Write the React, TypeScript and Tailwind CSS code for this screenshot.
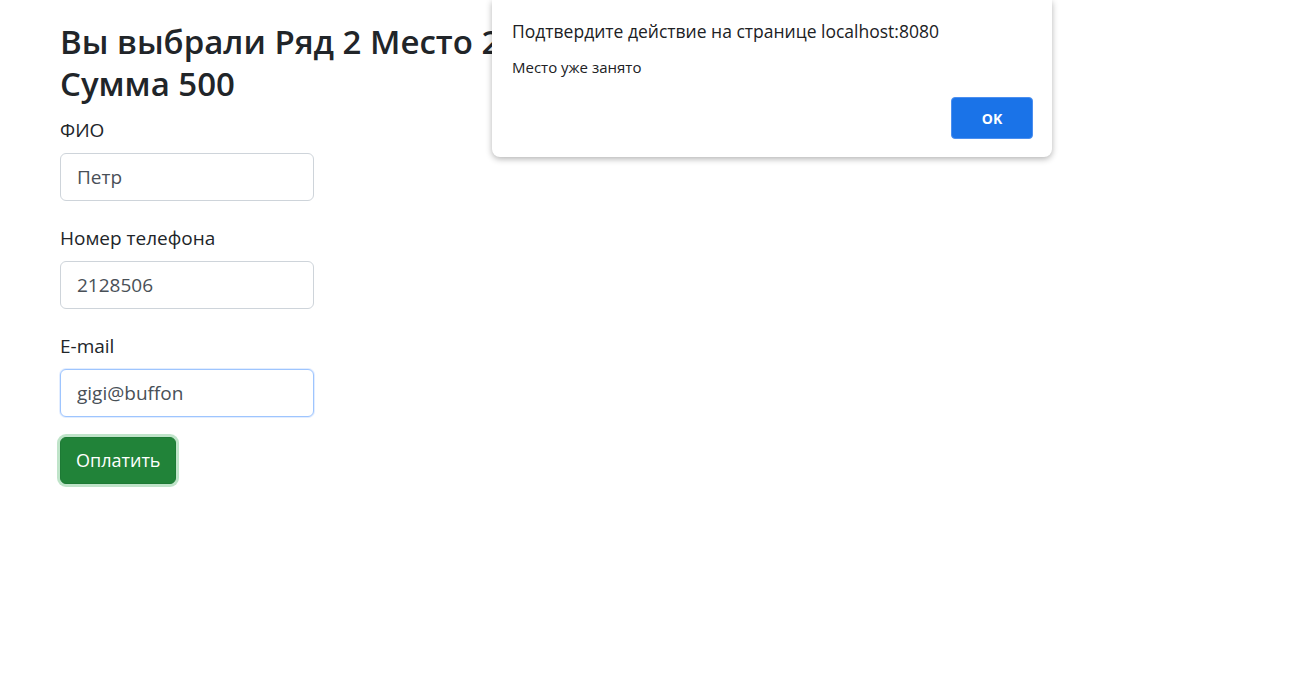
import React from "react";

const font = { fontFamily: '"Open Sans", "Noto Sans", sans-serif' };

function Field({ label, value, focused }: { label: string; value: string; focused?: boolean }) {
  return (
    <div className="mb-6">
      <label className="mb-[9px] block text-[19px] leading-[27px] text-[#212529]">{label}</label>
      <input
        readOnly
        value={value}
        className={`block h-[48px] w-[254px] rounded-[6px] border bg-white px-4 text-[19px] text-[#495057] outline-none ${
          focused ? "border-[#9ec5fe] shadow-[0_0_0_1px_rgba(13,110,253,0.12)]" : "border-[#ced4da]"
        }`}
      />
    </div>
  );
}

export default function App() {
  return (
    <div className="relative min-h-[691px] w-full bg-white" style={font}>
      <div className="px-[60px] pt-[21px]">
        <h1 className="mb-3 text-[33px] font-semibold leading-[42px] text-[#212529]">
          Вы выбрали Ряд 2 Место 2
          <br />
          Сумма 500
        </h1>
        <Field label="ФИО" value="Петр" />
        <Field label="Номер телефона" value="2128506" />
        <Field label="E-mail" value="gigi@buffon" focused />
        <button className="-mt-[4px] h-[47px] rounded-[6px] border border-[#1d7a35] bg-[#218339] px-[15px] text-[18px] text-white shadow-[0_0_0_3px_rgba(113,195,135,0.45)]">
          Оплатить
        </button>
      </div>

      <div className="absolute left-[492px] top-0 w-[560px] rounded-b-[8px] bg-white px-5 pb-[18px] pt-[19px] shadow-[0_2px_6px_rgba(0,0,0,0.3)]">
        <div className="text-[17.5px] leading-[24px] text-[#202124]">Подтвердите действие на странице localhost:8080</div>
        <div className="mt-[14px] text-[15px] leading-[20px] text-[#202124]">Место уже занято</div>
        <div className="mt-[20px] flex justify-end pr-[-1px]">
          <button className="-mr-[1px] h-[42px] w-[82px] rounded-[4px] border border-[#4b8ff0] bg-[#1a73e8] text-[14px] font-bold text-white">
            OK
          </button>
        </div>
      </div>
    </div>
  );
}
